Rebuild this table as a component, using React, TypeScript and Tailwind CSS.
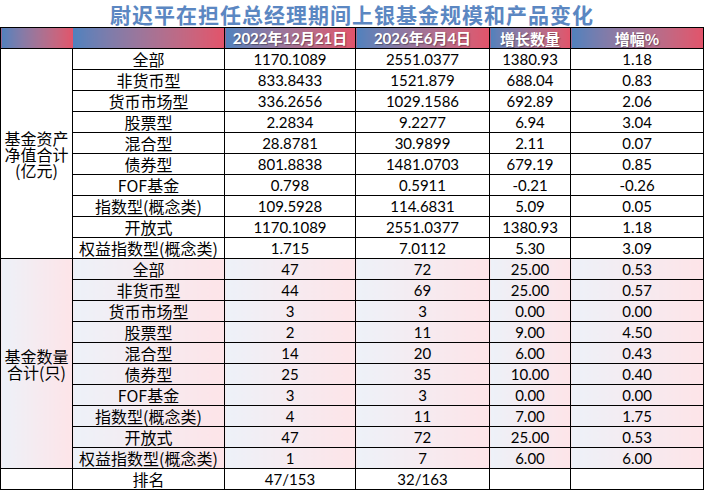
const sizeRows = [
  ["全部", "1170.1089", "2551.0377", "1380.93", "1.18"],
  ["非货币型", "833.8433", "1521.879", "688.04", "0.83"],
  ["货币市场型", "336.2656", "1029.1586", "692.89", "2.06"],
  ["股票型", "2.2834", "9.2277", "6.94", "3.04"],
  ["混合型", "28.8781", "30.9899", "2.11", "0.07"],
  ["债券型", "801.8838", "1481.0703", "679.19", "0.85"],
  ["FOF基金", "0.798", "0.5911", "-0.21", "-0.26"],
  ["指数型(概念类)", "109.5928", "114.6831", "5.09", "0.05"],
  ["开放式", "1170.1089", "2551.0377", "1380.93", "1.18"],
  ["权益指数型(概念类)", "1.715", "7.0112", "5.30", "3.09"],
];

const countRows = [
  ["全部", "47", "72", "25.00", "0.53"],
  ["非货币型", "44", "69", "25.00", "0.57"],
  ["货币市场型", "3", "3", "0.00", "0.00"],
  ["股票型", "2", "11", "9.00", "4.50"],
  ["混合型", "14", "20", "6.00", "0.43"],
  ["债券型", "25", "35", "10.00", "0.40"],
  ["FOF基金", "3", "3", "0.00", "0.00"],
  ["指数型(概念类)", "4", "11", "7.00", "1.75"],
  ["开放式", "47", "72", "25.00", "0.53"],
  ["权益指数型(概念类)", "1", "7", "6.00", "6.00"],
];

const head = "bg-gradient-to-r from-[#4f81bd] to-[#e2536a] text-white font-bold text-[15px] [text-shadow:1px_1px_1px_rgba(0,0,0,0.35)]";
const pale = "bg-gradient-to-r from-[#edf1f8] to-[#fde4e8]";
const cell = "border border-black text-center align-middle p-0 leading-none";
const cjk = "font-['Noto_Sans_CJK_SC',sans-serif] text-[16px]";
const num = "font-['Lato','Noto_Sans_CJK_SC',sans-serif] text-[15px]";

function DataRow({ r, bg, label }: { r: string[]; bg: string; label?: React.ReactNode }) {
  return (
    <tr className="h-[21px]">
      {label}
      <td className={`${cell} ${bg} ${cjk}`}>{r[0]}</td>
      {r.slice(1).map((v, i) => (
        <td key={i} className={`${cell} ${bg} ${num}`}>{v}</td>
      ))}
    </tr>
  );
}

export default function App() {
  return (
    <div className="w-[704px] h-[490px] bg-white overflow-hidden text-black">
      <table className="table-fixed border-collapse w-[704px]">
        <colgroup>
          <col className="w-[72px]" />
          <col className="w-[152px]" />
          <col className="w-[131px]" />
          <col className="w-[134px]" />
          <col className="w-[81px]" />
          <col className="w-[133px]" />
        </colgroup>
        <tbody>
          <tr className="h-[27px]">
            <td colSpan={6} className="border-b border-black text-center p-0 pt-[2px] leading-[25px] font-['Noto_Sans_CJK_SC',serif] font-bold text-[21px] tracking-[1px] text-[#5b87c2]">
              尉迟平在担任总经理期间上银基金规模和产品变化
            </td>
          </tr>
          <tr className="h-[21px]">
            <td className={`${head} border-y border-l border-black p-0`}></td>
            <td className={`${head} border-y border-r border-black p-0`}></td>
            <td className={`${cell} ${head} font-['Lato','Noto_Sans_CJK_SC',sans-serif] text-[14px]`}>2022年12月21日</td>
            <td className={`${cell} ${head} font-['Lato','Noto_Sans_CJK_SC',sans-serif] text-[14px]`}>2026年6月4日</td>
            <td className={`${cell} ${head} font-['Noto_Sans_CJK_SC',sans-serif]`}>增长数量</td>
            <td className={`${cell} ${head} font-['Noto_Sans_CJK_SC',sans-serif]`}>增幅%</td>
          </tr>
          {sizeRows.map((r, i) => (
            <DataRow
              key={r[0]}
              r={r}
              bg="bg-white"
              label={
                i === 0 ? (
                  <td rowSpan={10} className={`${cell} bg-white font-['Noto_Sans_CJK_SC',sans-serif] text-[16px] leading-[21px]`}>
                    基金资产<br />净值合计<br />(亿元)
                  </td>
                ) : undefined
              }
            />
          ))}
          {countRows.map((r, i) => (
            <DataRow
              key={"c" + r[0]}
              r={r}
              bg={pale}
              label={
                i === 0 ? (
                  <td rowSpan={10} className={`${cell} ${pale} font-['Noto_Sans_CJK_SC',sans-serif] text-[16px] leading-[21px]`}>
                    基金数量<br />合计(只)
                  </td>
                ) : undefined
              }
            />
          ))}
          <tr className="h-[21px]">
            <td className={`${cell} bg-white`}></td>
            <td className={`${cell} bg-white ${cjk}`}>排名</td>
            <td className={`${cell} bg-white ${num}`}>47/153</td>
            <td className={`${cell} bg-white ${num}`}>32/163</td>
            <td className={`${cell} bg-white`}></td>
            <td className={`${cell} bg-white`}></td>
          </tr>
        </tbody>
      </table>
    </div>
  );
}
